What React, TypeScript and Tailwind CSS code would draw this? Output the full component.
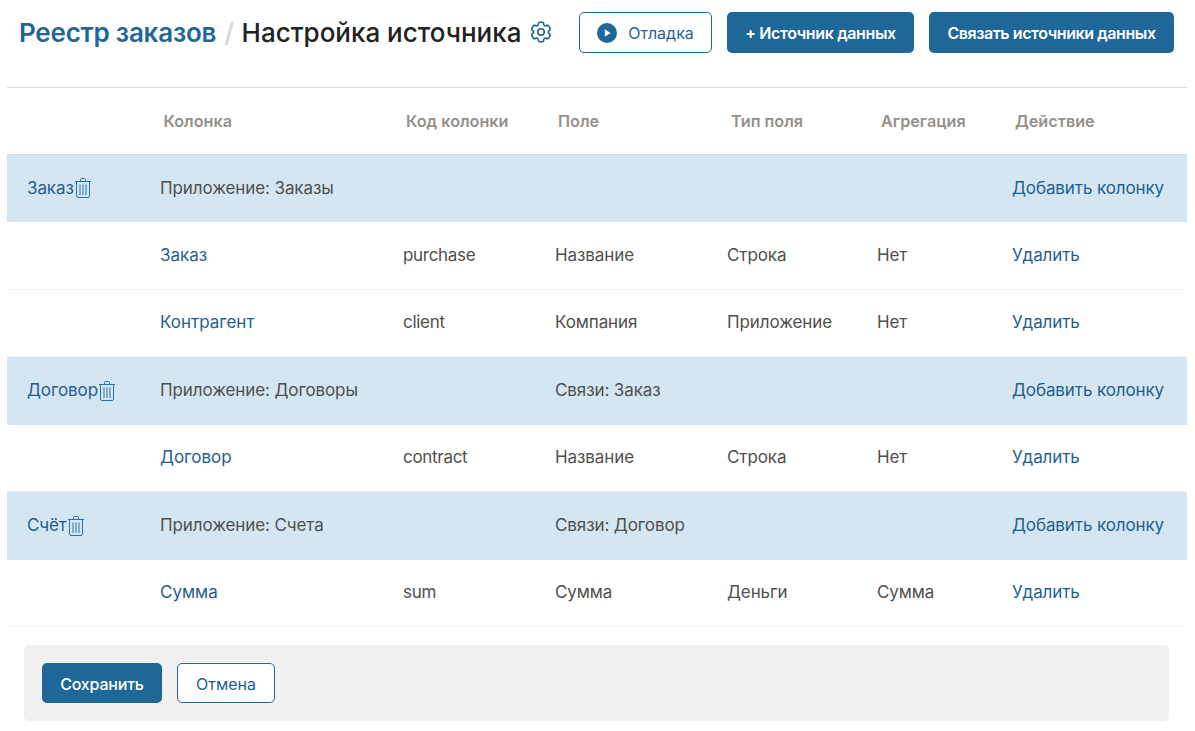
import { HiOutlineCog6Tooth } from 'react-icons/hi2';

type Row = {
  source?: string;
  name: string;
  code?: string;
  field?: string;
  type?: string;
  agg?: string;
};

const cols = 'grid grid-cols-[153px_243px_152px_172px_150px_135px_175px]';

const rows: Row[] = [
  { source: 'Заказ', name: 'Приложение: Заказы' },
  { name: 'Заказ', code: 'purchase', field: 'Название', type: 'Строка', agg: 'Нет' },
  { name: 'Контрагент', code: 'client', field: 'Компания', type: 'Приложение', agg: 'Нет' },
  { source: 'Договор', name: 'Приложение: Договоры', field: 'Связи: Заказ' },
  { name: 'Договор', code: 'contract', field: 'Название', type: 'Строка', agg: 'Нет' },
  { source: 'Счёт', name: 'Приложение: Счета', field: 'Связи: Договор' },
  { name: 'Сумма', code: 'sum', field: 'Сумма', type: 'Деньги', agg: 'Сумма' },
];

function TrashIcon() {
  return (
    <svg width="18" height="22" viewBox="0 0 18 22" fill="none" stroke="#2b72a6" strokeWidth="1" className="shrink-0">
      <path d="M1 4.5h16M6.5 4.5V2.5a1 1 0 0 1 1-1h3a1 1 0 0 1 1 1v2" />
      <path d="M2.5 4.5v14.5a1.5 1.5 0 0 0 1.5 1.5h10a1.5 1.5 0 0 0 1.5-1.5V4.5" />
      <path d="M6 7.5v10.5M9 7.5v10.5M12 7.5v10.5" />
    </svg>
  );
}

function PlayIcon() {
  return (
    <svg width="20" height="20" viewBox="0 0 20 20">
      <circle cx="10" cy="10" r="10" fill="#1f6699" />
      <path d="M7.8 6.2v7.6l5.8-3.8z" fill="#fff" />
    </svg>
  );
}

function TableRow({ row }: { row: Row }) {
  const isSource = !!row.source;
  return (
    <div className={`${cols} h-[67.5px] items-center text-[17px] tracking-[-0.1px] text-[#4f4f4f] ${isSource ? 'bg-[#d5e6f3]' : 'border-b border-[#f3f3f3]'}`}>
      <div className="flex items-center pl-5 text-[#1f5f8f]">
        {row.source}
        {row.source && <TrashIcon />}
      </div>
      <div className={isSource ? '' : 'tracking-normal text-[#1f5f8f]'}>{row.name}</div>
      <div className="tracking-[-0.3px]">{row.code}</div>
      <div>{row.field}</div>
      <div>{row.type}</div>
      <div>{row.agg}</div>
      <div className="text-[#1f5f8f]">{isSource ? 'Добавить колонку' : 'Удалить'}</div>
    </div>
  );
}

export default function App() {
  return (
    <div className="h-[731px] w-[1195px] overflow-hidden bg-white font-['Inter',sans-serif]">
      {/* Header */}
      <div className="flex h-[87px] items-start justify-between pl-[19px] pr-[21px] pt-3">
        <div className="flex h-10 items-center text-[26px] font-semibold">
          <span className="tracking-[-0.22px] text-[#1f6699]">Реестр заказов</span>
          <span className="ml-[8px] mr-[7.5px] text-[#d9d9d9]">/</span>
          <span className="font-medium text-[#222222]">Настройка источника</span>
          <HiOutlineCog6Tooth size={26} className="ml-[7px] text-[#1f6699]" />
        </div>
        <div className="flex gap-[15px]">
          <button className="flex h-[41px] w-[133px] items-center justify-center gap-[11px] rounded-[5px] border border-[#1f6699] text-base text-[#1f6699]">
            <PlayIcon />
            Отладка
          </button>
          <button className="h-[41px] w-[187px] rounded-[5px] bg-[#1f6699] text-base font-semibold tracking-[-0.36px] text-white">
            + Источник данных
          </button>
          <button className="h-[41px] w-[245px] rounded-[5px] bg-[#1f6699] text-base font-semibold tracking-[-0.42px] text-white">
            Связать источники данных
          </button>
        </div>
      </div>

      {/* Table */}
      <div className="mx-[7px] w-[1180px]">
        <div className={`${cols} h-[67.5px] items-center border-y border-[#dcdcdc] text-[16.2px] font-semibold text-[#94918c]`}>
          <div />
          <div className="pl-[3.5px]">Колонка</div>
          <div className="pl-[3px]">Код колонки</div>
          <div className="pl-[3px]">Поле</div>
          <div className="pl-[4px]">Тип поля</div>
          <div className="pl-[4px]">Агрегация</div>
          <div className="pl-[3px]">Действие</div>
        </div>
        {rows.map((row) => (
          <TableRow key={row.name} row={row} />
        ))}
      </div>

      {/* Footer */}
      <div className="ml-6 mt-[18px] flex h-[76px] w-[1145px] items-center gap-[15px] rounded-[5px] bg-[#f1f1f1] pl-[18px]">
        <button className="h-10 w-[120px] rounded-[5px] bg-[#1f6699] pt-px text-base font-medium tracking-[-0.2px] text-white">Сохранить</button>
        <button className="h-10 w-[98px] rounded-[5px] border border-[#1f6699] bg-white pt-px text-base text-[#1f5f8f]">Отмена</button>
      </div>
    </div>
  );
}
